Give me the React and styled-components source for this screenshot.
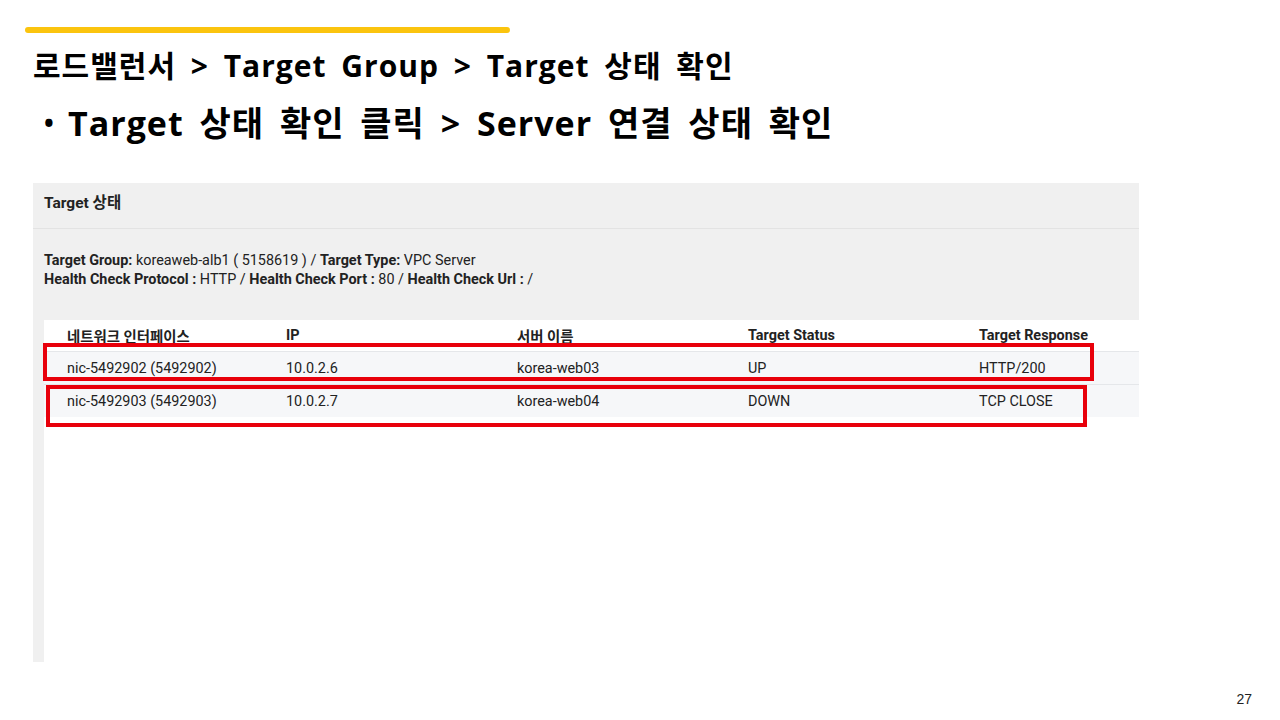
import React from 'react';
import styled, { createGlobalStyle } from 'styled-components';

const Global = createGlobalStyle`
  body {
    margin: 0;
    background: #fff;
  }
`;

const Slide = styled.div`
  position: relative;
  width: 1280px;
  height: 720px;
  display: flex;
  flex-direction: column;
  background: #fff;
  overflow: hidden;
`;

const AccentBar = styled.div`
  margin: 27px 0 0 25px;
  width: 485px;
  height: 6px;
  border-radius: 3px;
  background: #fbc40e;
`;

const Title = styled.h1`
  margin: 13px 0 0 33px;
  font-family: "Open Sans", "Noto Sans CJK KR", sans-serif;
  font-weight: 700;
  font-size: 30px;
  line-height: 40px;
  letter-spacing: 1px;
  word-spacing: 6px;
  color: #000;
`;

const Bullet = styled.div`
  display: flex;
  align-items: center;
  margin: 14px 0 0 44px;
  font-family: "Open Sans", "Noto Sans CJK KR", sans-serif;
  font-weight: 700;
  font-size: 34px;
  line-height: 46px;
  letter-spacing: 1px;
  word-spacing: 6px;
  color: #000;

  &::before {
    content: '•';
    width: 24px;
    font-size: 26px;
  }
`;

const Panel = styled.section`
  margin: 37px 0 0 33px;
  width: 1106px;
  height: 479px;
  display: flex;
  flex-direction: column;
  background: #f0f0f0;
  font-family: Roboto, "Noto Sans CJK KR", sans-serif;
  color: #222;
`;

const PanelHeader = styled.div`
  height: 46px;
  box-sizing: border-box;
  padding: 10px 0 0 11px;
  font-size: 15.5px;
  line-height: 20px;
  font-weight: 700;
  border-bottom: 1px solid #e3e3e3;
`;

const Info = styled.div`
  height: 91px;
  padding: 22px 0 0 11px;
  box-sizing: border-box;
  font-size: 14.4px;
  line-height: 19px;

  b {
    font-weight: 700;
  }
`;

const TableArea = styled.div`
  flex: 1;
  margin-left: 11px;
  background: #fff;
`;

const Row = styled.div`
  display: grid;
  grid-template-columns: 219px 231px 231px 231px 1fr;
  align-items: center;
  height: ${p => (p.head ? '31px' : '32px')};
  padding-left: 23px;
  font-size: 14.4px;
  font-weight: ${p => (p.head ? 700 : 400)};
  background: ${p => (p.head ? '#fff' : '#f6f7f9')};
  border-top: ${p => (p.head ? 'none' : '1px solid #e5e7ea')};
`;

const Highlight = styled.div`
  position: absolute;
  border: 4px solid #e8000b;
  box-sizing: border-box;
`;

const PageNo = styled.div`
  margin: auto 0 13px;
  line-height: 16px;
  padding-right: 28px;
  text-align: right;
  font-family: "Liberation Sans", Arial, sans-serif;
  font-size: 14px;
  color: #222;
`;

const targets = [
  ['nic-5492902 (5492902)', '10.0.2.6', 'korea-web03', 'UP', 'HTTP/200'],
  ['nic-5492903 (5492903)', '10.0.2.7', 'korea-web04', 'DOWN', 'TCP CLOSE'],
];

export default function App() {
  return (
    <Slide>
      <Global />
      <AccentBar />
      <Title>로드밸런서 &gt; Target Group &gt; Target 상태 확인</Title>
      <Bullet>Target 상태 확인 클릭 &gt; Server 연결 상태 확인</Bullet>

      <Panel>
        <PanelHeader>Target 상태</PanelHeader>
        <Info>
          <div>
            <b>Target Group:</b> koreaweb-alb1 ( 5158619 ) / <b>Target Type:</b> VPC Server
          </div>
          <div>
            <b>Health Check Protocol :</b> HTTP / <b>Health Check Port :</b> 80 / <b>Health Check Url :</b> /
          </div>
        </Info>
        <TableArea>
          <Row head>
            <span>네트워크 인터페이스</span>
            <span>IP</span>
            <span>서버 이름</span>
            <span>Target Status</span>
            <span>Target Response</span>
          </Row>
          {targets.map(t => (
            <Row key={t[0]}>
              {t.map((c, i) => (
                <span key={i}>{c}</span>
              ))}
            </Row>
          ))}
        </TableArea>
      </Panel>

      <PageNo>27</PageNo>

      <Highlight style={{ left: 43, top: 343, width: 1051, height: 38 }} />
      <Highlight style={{ left: 46, top: 385, width: 1041, height: 42 }} />
    </Slide>
  );
}
